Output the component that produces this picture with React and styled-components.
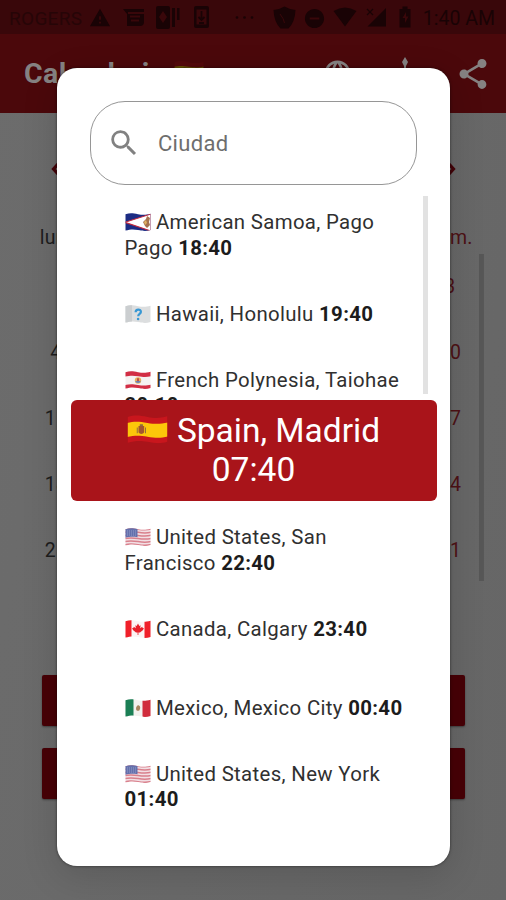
import React, { useState } from 'react';
import styled, { createGlobalStyle } from 'styled-components';
import { MdWarning, MdShare, MdLanguage, MdSearch, MdRemoveCircle } from 'react-icons/md';

const GlobalStyle = createGlobalStyle`
  * {
    box-sizing: border-box;
  }
  body {
    margin: 0;
    overflow: hidden;
    font-family: Roboto, "Liberation Sans", sans-serif;
  }
`;

// only the first and last columns stick out beside the dialog
const WEEKS = [
    ['lun.', 'dom.'],
    ['', 3],
    [4, 10],
    [11, 17],
    [18, 24],
    [25, 31],
];

const CITIES = [
    { flag: 'as', name: 'American Samoa, Pago Pago', time: '18:40' },
    { flag: 'unknown', name: 'Hawaii, Honolulu', time: '19:40' },
    { flag: 'pf', name: 'French Polynesia, Taiohae', time: '20:10' },
    null, // sits behind the selected city
    { flag: 'us', name: 'United States, San Francisco', time: '22:40' },
    { flag: 'ca', name: 'Canada, Calgary', time: '23:40' },
    { flag: 'mx', name: 'Mexico, Mexico City', time: '00:40' },
    { flag: 'us', name: 'United States, New York', time: '01:40' },
];

const WAVE = 'M0.5 1.2C5 -0.2 8 0.2 13 1.2S21 2 25.5 0.8V17C21 18.4 18 18 13 17S5 16.4 0.5 17.6Z';

const FlagArt = ({ code }) => {
    switch (code) {
        case 'as':
            return (
                <>
                    <rect width="26" height="19" fill="#1c2c83" />
                    <path d="M0 9.3L26 1V18Z" fill="#fff" stroke="#c5283c" strokeWidth="1.1" />
                    <path d="M18 9l3-3 1-3 3 2-1 4 1 3-3 3-2-2z" fill="#a5714c" />
                    <path d="M19 9l2-2 1 3-2 2z" fill="#e0b060" />
                </>
            );
        case 'unknown':
            return (
                <>
                    <rect width="26" height="19" fill="#dcdedf" />
                    <path d="M0 0h7v19H0z" fill="#cbced0" />
                    <path d="M10.6 7.2c0-3.6 5.5-3.4 5.3-.3-.1 2-2.7 2-2.7 4.4" fill="none" stroke="#3898d4" strokeWidth="2.2" />
                    <circle cx="13.1" cy="14" r="1.3" fill="#3898d4" />
                </>
            );
        case 'pf':
            return (
                <>
                    <rect width="26" height="19" fill="#f5f2f2" />
                    <path d="M0 0h26v5.3c-5 .9-8 .7-13-.1S5 4.5 0 5.6z" fill="#d22e45" />
                    <path d="M0 14c5-1 8-.8 13 0s8 .8 13-.2V19H0z" fill="#d22e45" />
                    <circle cx="13" cy="9.5" r="3.2" fill="#eab15c" />
                    <path d="M10.2 10h5.6a3 3 0 01-5.6 0z" fill="#6287c6" />
                    <path d="M12 7.2h2v3h-2z" fill="#c05048" />
                </>
            );
        case 'us':
            return (
                <>
                    <rect width="26" height="19" fill="#f2dfe4" />
                    {[1.2, 4.3, 7.4, 10.5, 13.6, 16.7].map((y) => (
                        <path key={y} d={`M0 ${y}c5-1.2 8-.8 13 0s8 1.1 13-.1`} fill="none" stroke="#d9808c" strokeWidth="1.5" />
                    ))}
                    <path d="M0 0h12.5v9.2C8 8.4 5 8.6 0 9.7z" fill="#6470ac" />
                    <path d="M2 3h9M2 5h9M2 7h9" stroke="#a8afd4" strokeWidth=".7" strokeDasharray="1 1" />
                </>
            );
        case 'ca':
            return (
                <>
                    <rect width="26" height="19" fill="#fbf4f4" />
                    <path d="M0 0h6.5v19H0zM19.5 0H26v19h-6.5z" fill="#f0202a" />
                    <path d="M13 3.5l1.3 2.4 1.3-.6-.4 3 2-1.5.5 1.2 1.3.2-1.2 2-2.8 2.3H13.4V15h-.8v-2.5H11L8.2 10.2 7 8.2l1.3-.2.5-1.2 2 1.5-.4-3 1.3.6z" fill="#e8202a" />
                </>
            );
        case 'mx':
            return (
                <>
                    <rect width="26" height="19" fill="#f3f1ee" />
                    <path d="M0 0h8.5v19H0z" fill="#1b7f55" />
                    <path d="M17.5 0H26v19h-8.5z" fill="#d02c3c" />
                    <path d="M11 10c0-2 1-4 3-3.6 1.5.5 1.5 3 .3 5.1-1.5.8-3 .3-3.3-1.5z" fill="#a98560" />
                </>
            );
        default:
            return (
                <>
                    <rect width="26" height="19" fill="#c8161d" />
                    <path d="M0 5c5-1.2 8-.8 13 0s8 .8 13-.3v9c-5 1.1-8 .9-13 .1S5 12.9 0 14z" fill="#fcc70a" />
                    <path d="M7.3 7h3.6v4c-.8 1.4-2.8 1.4-3.6 0z" fill="#a3562e" />
                    <path d="M8.1 5.8h2V7h-2zM6.2 8h.6v3.5h-.6zM11.4 8h.6v3.5h-.6z" fill="#8d6a42" />
                </>
            );
    }
};

const Flag = ({ code, size = 26 }) => (
    <FlagIcon viewBox="0 0 26 19" $size={size} aria-hidden="true">
        <defs>
            <clipPath id={`wave-${code}`}>
                <path d={WAVE} />
            </clipPath>
        </defs>
        <g clipPath={`url(#wave-${code})`}>
            <FlagArt code={code} />
        </g>
    </FlagIcon>
);

const StatusIcons = () => (
    <StatusDrawing viewBox="0 0 340 34" fill="currentColor" aria-hidden="true">
        {/* inbox */}
        <path d="M34 9h21v3H39v2h16v8q0 4-4 4H38V14z" />
        <path d="M41 16.5h10M42 20.5h8" stroke="#39070a" strokeWidth="2" />
        {/* cards */}
        <path d="M69 6h10q2 0 2 2v19q0 2-2 2H69q-2 0-2-2V8q0-2 2-2zM83 8h3v19h-3zM88 8h2.5v12H88z" />
        <path d="M74 11l4 6-4 6-4-6z" fill="#39070a" />
        {/* phone */}
        <path d="M107 6h11q2 0 2 2v18q0 2-2 2h-11q-2 0-2-2V8q0-2 2-2z" />
        <path d="M107.5 9.5h10v15h-10z" fill="#39070a" />
        <path d="M112.5 11v9M109.5 17l3 3 3-3M110 23h5" stroke="currentColor" strokeWidth="1.8" fill="none" />
        {/* more */}
        <circle cx="148" cy="17.5" r="1.3" />
        <circle cx="155.5" cy="17.5" r="1.3" />
        <circle cx="163" cy="17.5" r="1.3" />
        {/* shield */}
        <path d="M184.5 10q6-.5 11-3.5 5 3 11 3.5-.5 12-7 18.5h-8q-6.5-6.5-7-18.5z" />
        <path d="M191 14q4 5 4.5 9" stroke="#39070a" strokeWidth="1" fill="none" />
        {/* wifi */}
        <path d="M244.5 11q11.5-7 23 0L256 26.5z" />
        {/* signal */}
        <path d="M297 8v18.5h-18.5z" />
        <path d="M278 9l6 6M284 9l-6 6" stroke="currentColor" strokeWidth="1.2" />
        {/* battery */}
        <path d="M313.5 6.5h5V9h3v18.5h-11V9h3z" />
        <path d="M317 12l-3.5 6h2.5v5l3.5-6.5H317z" fill="#39070a" />
    </StatusDrawing>
);

const App = () => {
    const [search, setSearch] = useState('');

    return (
        <Screen>
            <GlobalStyle />

            <StatusBar>
                <Carrier>ROGERS</Carrier>
                <StatusGroup>
                    <MdWarning size={22} />
                    <StatusIcons />
                    <DoNotDisturb />
                </StatusGroup>
                <Clock>1:40 AM</Clock>
            </StatusBar>

            <AppBar>
                <Title>
                    <span>Calendario</span>
                    <DimFlag><Flag code="es" size={30} /></DimFlag>
                </Title>
                <Actions>
                    <MdLanguage size={31} />
                    <svg width="30" height="34" viewBox="0 0 30 34" fill="currentColor">
                        <path d="M16 0l3 5-2 4v16h-2V9l-2-4z" />
                    </svg>
                    <MdShare size={36} />
                </Actions>
            </AppBar>

            <MonthNav>
                <Chevron viewBox="0 0 8 14"><path d="M8 2L3.5 7 8 12" /></Chevron>
                <Chevron viewBox="0 0 8 14"><path d="M0 2l4.5 5L0 12" /></Chevron>
            </MonthNav>

            <CalendarArea>
                {WEEKS.map(([first, last], i) => (
                    <Week key={i} $height={i === 0 ? 32 : 66}>
                        <Cell>{first}</Cell>
                        <Cell $holiday>{last}</Cell>
                    </Week>
                ))}
                <CalendarScroll />
            </CalendarArea>

            <Buttons>
                <DarkButton />
                <DarkButton />
            </Buttons>

            <Overlay>
                <Dialog>
                    <SearchBox>
                        <MdSearch size={34} />
                        <SearchInput
                            placeholder="Ciudad"
                            value={search}
                            onChange={(e) => setSearch(e.target.value)}
                        />
                    </SearchBox>

                    <List>
                        {CITIES.map((city, i) => (
                            <Row key={i}>
                                {city && (
                                    <City>
                                        <Flag code={city.flag} /> {city.name} <b>{city.time}</b>
                                    </City>
                                )}
                            </Row>
                        ))}
                        <ListScroll />
                        <Selected>
                            <SelectedCity><Flag code="es" size={41} />Spain, Madrid</SelectedCity>
                            <span>07:40</span>
                        </Selected>
                    </List>
                </Dialog>
            </Overlay>
        </Screen>
    );
};

export default App;

const Screen = styled.div`
  position: relative;
  width: 506px;
  height: 900px;
  overflow: hidden;
  display: flex;
  flex-direction: column;
  background: linear-gradient(100deg, #6c6c6c, #666666);
`;

/* top bars */
const StatusBar = styled.div`
  height: 34px;
  flex: none;
  display: flex;
  align-items: center;
  padding: 2px 11px 0 9px;
  background: #39070a;
  color: #190305;
  font-size: 19.5px;
`;

const Carrier = styled.span`
  width: 80px;
  color: #260507;
  font-size: 19px;
  letter-spacing: 0.3px;
`;

const StatusGroup = styled.div`
  display: flex;
  align-items: center;
  position: relative;
  width: 320px;
  height: 32px;
`;

const StatusDrawing = styled.svg`
  position: absolute;
  left: 0;
  top: -2px;
  width: 340px;
  height: 34px;
`;

const DoNotDisturb = styled(MdRemoveCircle)`
  width: 23px;
  height: 23px;
  margin-left: 192px;
`;

const Clock = styled.span`
  margin-left: auto;
  white-space: nowrap;
`;

const AppBar = styled.div`
  height: 79px;
  flex: none;
  display: flex;
  align-items: center;
  justify-content: space-between;
  padding: 0 15px 0 24px;
  background: #4b080b;
  color: #858282;
`;

const Title = styled.div`
  display: flex;
  align-items: center;
  font-size: 28.5px;
  font-weight: 700;
  letter-spacing: 0.4px;
  white-space: nowrap;
`;

const DimFlag = styled.span`
  display: flex;
  margin: 0 0 4px 8px;
  filter: brightness(0.42);
`;

const Actions = styled.div`
  display: flex;
  align-items: center;
  gap: 36px;
`;

/* calendar */
const MonthNav = styled.div`
  height: 108px;
  flex: none;
  display: flex;
  justify-content: space-between;
  padding: 49px 49px 0 50px;
`;

const Chevron = styled.svg`
  width: 8px;
  height: 14px;
  fill: none;
  stroke: #450409;
  stroke-width: 3.2;
`;

const CalendarArea = styled.div`
  position: relative;
  height: 454px;
  flex: none;
  padding: 0 23px;
`;

const Week = styled.div`
  height: ${(p) => p.$height}px;
  display: flex;
  justify-content: space-between;
`;

const Cell = styled.div`
  width: 66px;
  display: flex;
  align-items: center;
  justify-content: center;
  font-size: 19.5px;
  letter-spacing: 0.3px;
  color: ${(p) => (p.$holiday ? '#4d1115' : '#1d1d1d')};
`;

const CalendarScroll = styled.div`
  position: absolute;
  right: 22px;
  top: 33px;
  width: 5px;
  height: 327px;
  background: #575757;
`;

const Buttons = styled.div`
  display: flex;
  flex-direction: column;
  gap: 22px;
  padding: 0 41px 0 42px;
`;

const DarkButton = styled.button`
  height: 51px;
  border: none;
  border-radius: 2px;
  background: #470006;
  box-shadow: 0 1px 2px rgba(0, 0, 0, 0.4);
`;

/* dialog */
const Overlay = styled.div`
  position: absolute;
  inset: 0;
  display: flex;
  padding: 68px 56px 34px 57px;
`;

const Dialog = styled.div`
  flex: 1;
  min-width: 0;
  border-radius: 20px;
  background: #fff;
  box-shadow: 0 0 3px rgba(0, 0, 0, 0.55), 0 10px 36px rgba(0, 0, 0, 0.14);
  padding: 33px 0 0;
`;

const SearchBox = styled.div`
  height: 84px;
  margin: 0 33px;
  padding: 0 16px;
  display: flex;
  align-items: center;
  gap: 17px;
  border: 1px solid #969696;
  border-radius: 35px;
  color: #818181;

  svg {
    flex: none;
  }
`;

const SearchInput = styled.input`
  flex: 1;
  min-width: 0;
  padding: 0;
  border: none;
  outline: none;
  background: none;
  font-family: inherit;
  font-size: 22px;
  letter-spacing: 0.3px;

  &::placeholder {
    color: #6e6e6e;
    opacity: 1;
  }
`;

const List = styled.div`
  position: relative;
  margin-top: 11px;
`;

const Row = styled.div`
  height: 78.75px;
  display: flex;
  align-items: center;
  padding: 1px 43px 0 67.5px;
`;

const City = styled.div`
  font-size: 20.4px;
  line-height: 25.5px;
  letter-spacing: 0.33px;
  color: #303030;

  b {
    color: #1c1c1c;
  }
`;

const FlagIcon = styled.svg`
  display: inline-block;
  vertical-align: -0.15em;
  width: ${(p) => p.$size}px;
  height: ${(p) => (p.$size * 19) / 26}px;
`;

const ListScroll = styled.div`
  position: absolute;
  top: 0;
  right: 22px;
  width: 5px;
  height: 198px;
  background: #e2e2e2;
`;

const Selected = styled.div`
  position: absolute;
  top: 204px;
  left: 13.5px;
  right: 13.5px;
  height: 101px;
  padding-bottom: 2px;
  display: flex;
  flex-direction: column;
  align-items: center;
  justify-content: center;
  border-radius: 6px;
  background: #a9141a;
  color: #fff;
  font-size: 33.5px;
  line-height: 39px;
  white-space: nowrap;
`;

const SelectedCity = styled.div`
  display: flex;
  align-items: center;
  gap: 9px;
`;
